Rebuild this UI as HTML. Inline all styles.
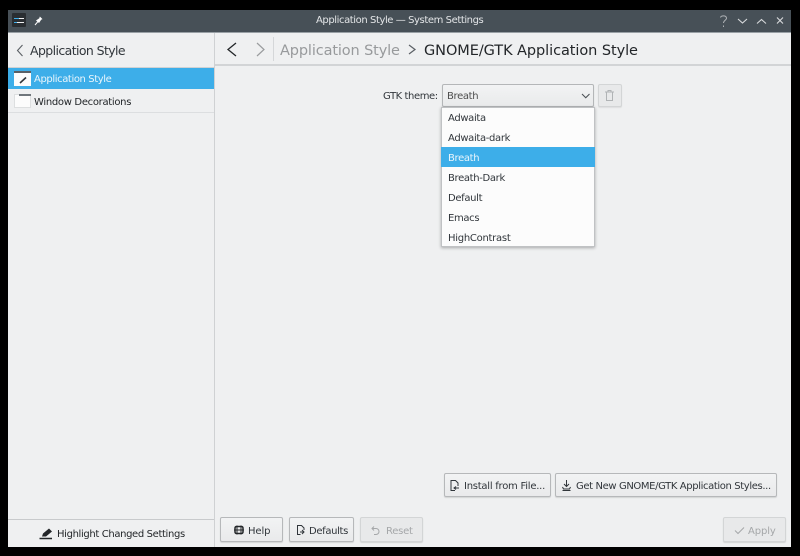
<!DOCTYPE html>
<html><head><meta charset="utf-8"><style>
html,body{margin:0;padding:0;background:#000;width:800px;height:556px;overflow:hidden}
#w{position:absolute;left:8px;top:10px;width:783px;height:537px;background:#eff0f1;border-radius:2px 2px 0 0;overflow:hidden}
.a{position:absolute;box-sizing:border-box}
.t{position:absolute;white-space:nowrap;font-family:"DejaVu Sans","Liberation Sans",sans-serif;font-size:10px;line-height:14px;color:#31363b;letter-spacing:-.34px}
.b{position:absolute;box-sizing:border-box;height:25px;background:linear-gradient(#f2f3f4,#e9eaeb);border:1px solid #b6b8ba;border-radius:2px;box-shadow:0 1px 1px rgba(0,0,0,.12)}
.d{background:#e8e9ea;border-color:#d3d5d6}
svg{position:absolute;overflow:visible;fill:none}
</style></head><body>
<div id="w"></div>
<div class="a" style="left:8px;top:10px;width:783px;height:23px;background:#475057;border-bottom:1px solid #99a0a5"></div>
<div class="a" style="left:12px;top:13px;width:14px;height:14px;background:#2a2e32;border-radius:1px"></div>
<svg style="left:0;top:0" width="800" height="40"><path d="M14 18.500h10M14 22.500h10" stroke="#eff0f1"/><path d="M14 18.500h5M14 22.500h3" stroke="#3daee9"/>
<path d="M35 25l3-3.500" stroke="#fcfcfc"/><path d="M36.500 20.500l3-2 .5-1.500 2 2-1 .5-2 3z" fill="#fcfcfc" stroke="#fcfcfc" stroke-width=".6"/>
<path d="M720.500 17.500c.5-2 5.500-2.500 6 .5.300 2-3 2.500-3 5M723.500 25.500v1.500" stroke="#aeb2b5"/>
<path d="M738 19l4.500 4 4.500-4M757 23.500l4.500-4 4.500 4M777 17.500l6 6M783 17.500l-6 6" stroke="#d8dadc" stroke-width="1.100"/></svg>
<span class="t" style="left:316px;top:14px;color:#e3e5e7;letter-spacing:-.42px">Application Style — System Settings</span>

<!-- sidebar -->
<div class="a" style="left:214px;top:33px;width:1px;height:514px;background:#cfd1d3"></div>
<svg style="left:0;top:0" width="300" height="70"><path d="M22.500 45l-5 5.500 5 5.500" stroke="#5b6065" stroke-width="1.100"/><path d="M236 43l-8 6.500 8 6.500" stroke="#232629" stroke-width="1.300"/><path d="M257 43l7 6.500-7 6.500" stroke="#9a9c9e" stroke-width="1.200"/></svg>
<span class="t" style="left:30px;top:44px;font-size:12.500px;letter-spacing:-.6px">Application Style</span>
<div class="a" style="left:8px;top:67px;width:206px;height:1px;background:#d0d2d4"></div>
<div class="a" style="left:8px;top:68px;width:206px;height:21px;background:#3daee9"></div>
<div class="a" style="left:14px;top:71px;width:17px;height:15px;background:#fcfcfc;border-top:2px solid #5a6066"></div>
<svg style="left:0;top:0" width="60" height="110"><path d="M20 83l6-5.500" stroke="#31363b" stroke-width="1.600"/></svg>
<span class="t" style="left:34px;top:73px;color:#e8f5fc;letter-spacing:-.4px">Application Style</span>
<div class="a" style="left:14px;top:94px;width:17px;height:14px;background:#fcfcfc;border:1px solid #dddfe0"></div>
<div class="a" style="left:19px;top:94px;width:12px;height:2px;background:#70777d"></div>
<span class="t" style="left:34px;top:96px;color:#232629;letter-spacing:-.31px">Window Decorations</span>
<div class="a" style="left:8px;top:112px;width:206px;height:1px;background:#dcdee0"></div>
<div class="a" style="left:8px;top:519px;width:206px;height:1px;background:#c8cacc"></div>
<svg style="left:0;top:0;" width="60" height="545"><path d="M39.500 538.500h12.500" stroke="#232629" stroke-width="1.500"/><path d="M42 536.500l1-3 6-5 3 3-6 5z" fill="#232629"/></svg>
<span class="t" style="left:57px;top:528px;color:#232629;letter-spacing:-.36px">Highlight Changed Settings</span>

<!-- header -->
<div class="a" style="left:215px;top:64px;width:576px;height:2px;background:#d2d4d6"></div>
<div class="a" style="left:273px;top:37px;width:1px;height:24px;background:#d5d7d9"></div>
<span class="t" style="left:280px;top:42px;font-size:14.500px;color:#989a9c;letter-spacing:-.13px;line-height:18px">Application Style</span>
<svg style="left:0;top:0" width="420" height="60"><path d="M409 45l6 4.500-6 4.500" stroke="#5b6065" stroke-width="1.200"/></svg>
<span class="t" style="left:424px;top:42px;font-size:14.500px;color:#232629;letter-spacing:-.07px;line-height:18px">GNOME/GTK Application Style</span>

<!-- form -->
<span class="t" style="left:383px;top:90px;letter-spacing:-.42px">GTK theme:</span>
<div class="b" style="left:442px;top:84px;width:152px;height:23px;border-color:#b4b6b8"></div>
<span class="t" style="left:447px;top:90px;color:#4d4d4d">Breath</span>
<div class="b d" style="left:598px;top:84px;width:24px;height:23px;box-shadow:0 1px 1px rgba(0,0,0,.08)"></div>
<svg style="left:0;top:0" width="620" height="110"><path d="M582 94l3.750 3.750 3.750-3.750" stroke="#4d5257" stroke-width="1.100"/>
<path d="M605 92h9M608 92v-1.500h3V92M606.500 92.500v8h6v-8" stroke="#b0b3b5"/></svg>

<div class="a" style="left:441px;top:107px;width:154px;height:140px;background:#fcfcfc;border:1px solid #c0c2c4;box-shadow:0 1px 3px rgba(0,0,0,.3)"></div>
<div class="a" style="left:441px;top:147px;width:154px;height:20px;background:#3daee9"></div>
<span class="t" style="left:448px;top:112px">Adwaita</span>
<span class="t" style="left:448px;top:132px">Adwaita-dark</span>
<span class="t" style="left:448px;top:152px;color:#e8f5fc">Breath</span>
<span class="t" style="left:448px;top:172px">Breath-Dark</span>
<span class="t" style="left:448px;top:192px">Default</span>
<span class="t" style="left:448px;top:212px">Emacs</span>
<span class="t" style="left:448px;top:232px;letter-spacing:-.27px">HighContrast</span>

<!-- buttons -->
<div class="b" style="left:444px;top:473px;width:107px;height:24px"></div>
<div class="b" style="left:555px;top:473px;width:222px;height:24px"></div>
<span class="t" style="left:464px;top:480px;letter-spacing:-.25px">Install from File...</span>
<span class="t" style="left:576px;top:480px;letter-spacing:-.38px">Get New GNOME/GTK Application Styles...</span>
<svg style="left:0;top:0" width="600" height="500"><path d="M455 490.500h-4v-10h4.500l2.500 2.500v3M454 488h5M456 486.500l-2 1.500 2 1.500" stroke="#31363b"/><path d="M566.500 480v6M564 484l2.500 2.500 2.500-2.500M562.500 487l1 2h6l1-2M562.500 490.500h8" stroke="#31363b"/></svg>

<div class="b" style="left:220px;top:517px;width:63px"></div>
<div class="b" style="left:289px;top:517px;width:65px"></div>
<div class="b d" style="left:360px;top:517px;width:63px"></div>
<div class="b d" style="left:723px;top:517px;width:63px"></div>
<span class="t" style="left:248px;top:525px;letter-spacing:-.1px">Help</span>
<span class="t" style="left:309px;top:525px;letter-spacing:-.35px">Defaults</span>
<span class="t" style="left:386px;top:525px;color:#a5a7a9;letter-spacing:-.25px">Reset</span>
<span class="t" style="left:748px;top:525px;color:#a5a7a9;letter-spacing:-.1px">Apply</span>
<svg style="left:0;top:0" width="800" height="545"><rect x="235" y="526.500" width="8" height="7" rx="1.500" stroke="#232629" stroke-width="1.500"/><path d="M237 525.500v9M241 525.500v9M234 530h10" stroke="#232629"/>
<path d="M300.500 534.500h-3v-9h4l2.500 2.500v2M300 532h4M302 530l2 2-2 2" stroke="#31363b"/>
<path d="M374 526.500l-2 2 2 2M372 528.500h4a3 3 0 0 1 0 6h-2" stroke="#a5a7a9"/>
<path d="M735 530.500l3 3 6-6" stroke="#a5a7a9"/></svg>
</body></html>
